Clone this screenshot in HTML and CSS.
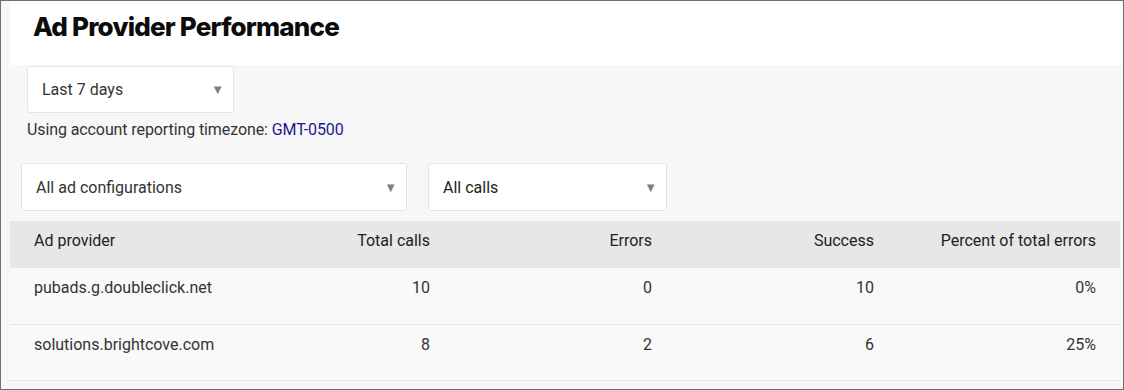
FILE: index.html
```html
<!DOCTYPE html>
<html lang="en">
<head>
  <meta charset="UTF-8">
  <title>Ad Provider Performance</title>
  <link rel="stylesheet" href="styles.css">
</head>
<body>

<div id="frame">
  <div id="page">
    <div class="page-header">
      <h1>Ad Provider Performance</h1>
    </div>

    <div class="filters">
      <div class="select select-range">
        <span>Last 7 days</span>
        <span class="arrow">&#9660;</span>
      </div>
      <p class="timezone">Using account reporting timezone: <a href="#">GMT-0500</a></p>

      <div class="filter-row">
        <div class="select select-config">
          <span>All ad configurations</span>
          <span class="arrow">&#9660;</span>
        </div>
        <div class="select select-calls">
          <span>All calls</span>
          <span class="arrow">&#9660;</span>
        </div>
      </div>
    </div>

    <table class="report">
      <thead>
        <tr>
          <th class="name">Ad provider</th>
          <th>Total calls</th>
          <th>Errors</th>
          <th>Success</th>
          <th>Percent of total errors</th>
        </tr>
      </thead>
      <tbody>
        <tr>
          <td class="name">pubads.g.doubleclick.net</td>
          <td>10</td>
          <td>0</td>
          <td>10</td>
          <td>0%</td>
        </tr>
        <tr>
          <td class="name">solutions.brightcove.com</td>
          <td>8</td>
          <td>2</td>
          <td>6</td>
          <td>25%</td>
        </tr>
      </tbody>
    </table>
  </div>
</div>

</body>
</html>
```

FILE: styles.css
```css
body {
  margin: 0;
  font-family: Roboto, 'Liberation Sans', sans-serif;
  color: #333;
}

#frame {
  width: 1124px;
  height: 390px;
  box-sizing: border-box;
  border: 1px solid #707070;
  background-color: #f7f7f7;
  overflow: hidden;
}

#page {
  margin-left: 9px;
}

.page-header {
  height: 64px;
  background-color: #ffffff;
  padding-left: 23px;
}

.page-header h1 {
  margin: 0;
  padding-top: 9px;
  font-family: Inter, 'Liberation Sans', sans-serif;
  font-weight: 800;
  font-size: 26px;
  letter-spacing: -0.8px;
  line-height: 34px;
  color: #0c0c0c;
}

.filters {
  padding-top: 1px;
}

.select {
  display: flex;
  align-items: center;
  justify-content: space-between;
  box-sizing: border-box;
  height: 47px;
  padding: 0 9px 0 14px;
  background-color: #ffffff;
  border: 1px solid #e4e4e4;
  border-radius: 3px;
  font-size: 16px;
}

.select .arrow {
  color: #808080;
  font-size: 13px;
}

.select-range {
  width: 207px;
  margin-left: 17px;
}

.timezone {
  margin: 5px 0 0 17px;
  font-size: 16px;
  letter-spacing: -0.1px;
  line-height: 24px;
}

.timezone a {
  color: #1a1a8e;
  text-decoration: none;
}

.filter-row {
  display: flex;
  gap: 21px;
  margin: 21px 0 0 11px;
}

.select-config {
  width: 386px;
  height: 48px;
}

.select-calls {
  width: 239px;
  height: 48px;
  color: #222;
}

.report {
  width: 1110px;
  margin-top: 10px;
  border-collapse: collapse;
  table-layout: fixed;
  font-size: 16px;
}

.report th,
.report td {
  padding: 0 24px;
  text-align: right;
  vertical-align: top;
}

.report .name {
  text-align: left;
}

.report thead tr {
  height: 47px;
  background-color: #e6e7e6;
}

.report th {
  padding-top: 8px;
  font-weight: 400;
  color: #222;
  line-height: 24px;
}

.report tbody tr {
  height: 56px;
  background-color: #f9f9f9;
  border-bottom: 1px solid #e6e6e6;
}

.report td {
  padding-top: 8px;
  line-height: 24px;
}
```
